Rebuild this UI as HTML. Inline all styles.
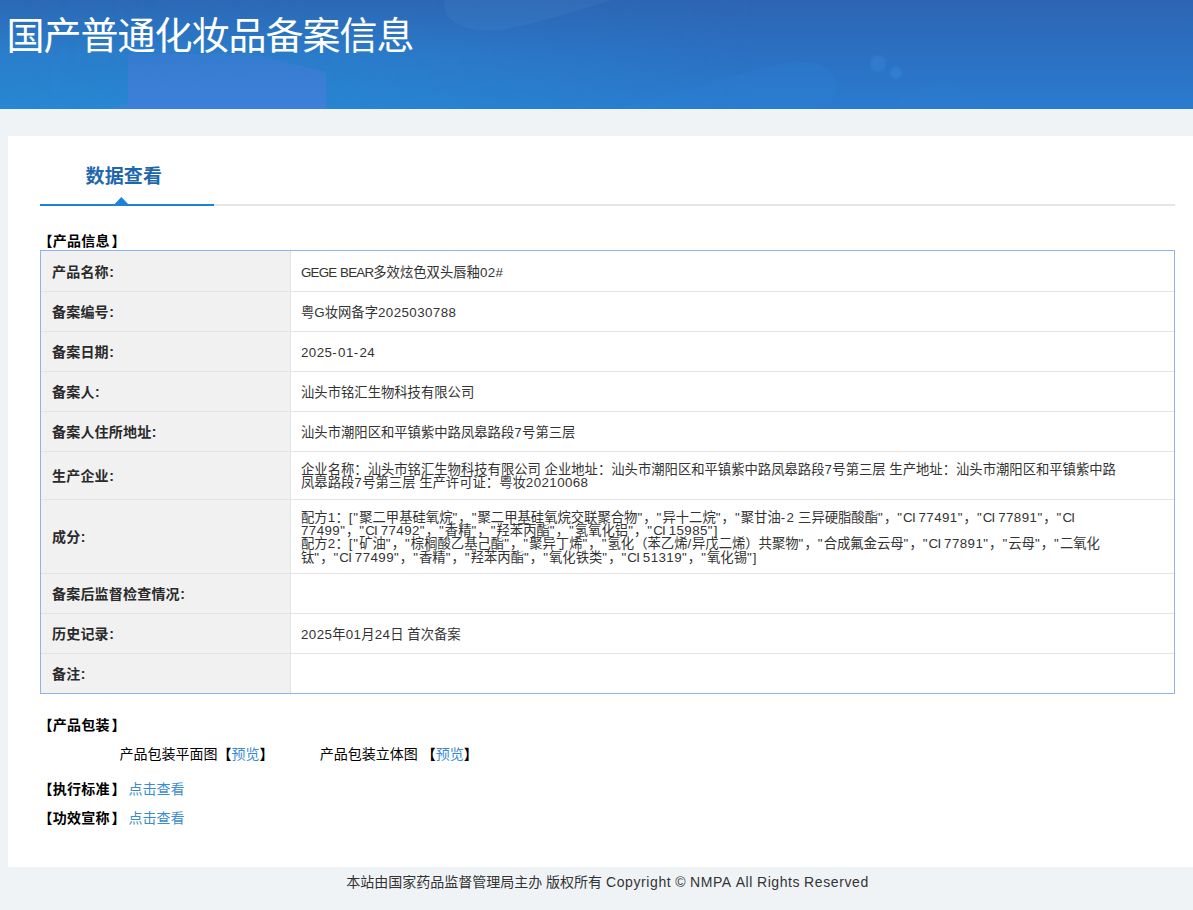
<!DOCTYPE html>
<html lang="zh-CN">
<head>
<meta charset="utf-8">
<title>国产普通化妆品备案信息</title>
<style>
*{box-sizing:border-box;}
html,body{margin:0;padding:0;}
body{background:#f0f3f6;}
.root{position:relative;width:100%;min-width:1193px;height:910px;overflow:hidden;background:#f0f3f6;font-family:"Liberation Sans","Noto Sans CJK SC",sans-serif;font-size:14px;color:#000;overflow:hidden;}
.hd{position:absolute;left:0;top:0;height:109px;width:1215px;overflow:hidden;background:#2b70c1;}
.hd svg{position:absolute;left:0;top:0;display:block;}
.hd h1{position:absolute;left:6.6px;top:11px;margin:0;font-weight:normal;font-size:38px;letter-spacing:-1px;line-height:50px;color:#fff;white-space:nowrap;}
.card{position:absolute;left:8px;top:136px;width:1199px;height:731px;background:#fff;}
.tab{position:absolute;left:32px;top:0;width:1135px;height:70px;border-bottom:2px solid #e6e6e6;}
.tab .on{position:absolute;left:0;top:0;width:174px;height:70px;border-bottom:2px solid #1e82d8;}
.tab .on b{position:absolute;left:45.5px;top:21px;letter-spacing:.15px;font-size:19px;line-height:40px;color:#1e67ac;white-space:nowrap;}
.tab .on i{position:absolute;left:74.7px;bottom:0;width:13.4px;height:7px;background:#1e82d8;clip-path:polygon(50% 0,100% 100%,0 100%);}
.sec{position:absolute;left:30.4px;font-weight:bold;font-size:14px;line-height:18px;white-space:nowrap;letter-spacing:.3px;}
.sec.n{font-weight:normal;letter-spacing:0;}
.sec .r{margin-left:1.6px;}
.sec a{font-weight:normal;letter-spacing:0;margin-left:-1.6px;}
.sec.n a{margin-left:0;}
.sec.n b{font-weight:bold;}
table{position:absolute;left:32px;top:114px;width:1135px;border-collapse:separate;border-spacing:0;border:1px solid #8fb3ea;table-layout:fixed;}
tr{height:40px;}
th,td{border-bottom:1px solid #e4e4e4;padding:0 10px;vertical-align:middle;text-align:left;white-space:nowrap;}
tr:last-child th,tr:last-child td{border-bottom:0;}
th{width:250px;background:#f1f1f1;font-weight:bold;font-size:14px;line-height:18px;color:#2a2a2a;padding-left:11px;border-right:1px solid #e4e4e4;}
td{font-size:13.33px;line-height:13.33px;color:#333;padding-top:2px;}
tr:first-child td{padding-top:3px;}
tr:first-child th{padding-top:2px;}
th{letter-spacing:.2px;}
th i{font-style:normal;margin-left:.4px;}
.d{letter-spacing:.42px;}
.q{letter-spacing:1.1px;}
.b{letter-spacing:.8px;}
.u{letter-spacing:-.78px;}
.h{letter-spacing:1.3px;}
.w{letter-spacing:.6px;}
a{color:#3a8cd0;text-decoration:none;}
.ft{position:absolute;left:0;top:867px;width:1215px;height:43px;text-align:center;font-size:14px;line-height:30px;color:#333;white-space:nowrap;}
.ft .u{letter-spacing:.6px;}
</style>
</head>
<body>
<div class="root">
<div class="hd">
<svg width="1215" height="109" viewBox="0 0 1215 109">
<defs>
<linearGradient id="g0" x1="0" y1="0" x2="0" y2="1"><stop offset="0" stop-color="#2d65b3"/><stop offset=".5" stop-color="#2c70c2"/><stop offset="1" stop-color="#2a7bcf"/></linearGradient>
<linearGradient id="g1" x1="0" y1="0" x2="0" y2="1"><stop offset="0" stop-color="#2c68b5"/><stop offset=".5" stop-color="#2a7ecb"/><stop offset="1" stop-color="#2787d2"/></linearGradient>
<linearGradient id="m1" x1="0" y1="0" x2="1" y2="0"><stop offset="0" stop-color="#fff"/><stop offset=".3" stop-color="#fff" stop-opacity=".8"/><stop offset=".62" stop-color="#fff" stop-opacity="0"/></linearGradient>
<mask id="mk"><rect width="1215" height="109" fill="url(#m1)"/></mask>
<linearGradient id="g2" x1="0" y1="0" x2="0" y2="1"><stop offset="0" stop-color="#3b7bd2" stop-opacity=".6"/><stop offset=".6" stop-color="#3c7ed6" stop-opacity=".95"/><stop offset="1" stop-color="#3b81d9"/></linearGradient>
<filter id="bl" x="-30%" y="-30%" width="160%" height="160%"><feGaussianBlur stdDeviation=".8"/></filter>
</defs>
<rect width="1215" height="109" fill="url(#g0)"/>
<rect width="1215" height="109" fill="url(#g1)" mask="url(#mk)"/>
<path d="M128 54H250L326 72V109H128Z" fill="url(#g2)"/>
<path d="M106 109L128 103V109Z" fill="#3b81d9" opacity=".8"/>
<path d="M445 0H612C575 12 530 25 500 30C465 34 440 20 445 0Z" fill="#5a93d6" opacity=".14"/>
<path d="M612 109C690 92 745 70 790 62C825 58 840 75 836 92C834 100 828 105 820 109Z" fill="#2f88dc" opacity=".2"/>
<circle cx="878" cy="63.5" r="8" fill="#3a8be0" opacity=".36" filter="url(#bl)"/>
<circle cx="896" cy="73" r="6" fill="#3a8be0" opacity=".42" filter="url(#bl)"/>
<path d="M895 109C900 92 920 85 945 85C965 85 978 95 980 109Z" fill="#2f88dc" opacity=".1"/>
</svg>
<h1>国产普通化妆品备案信息</h1>
</div>
<div class="card">
  <div class="tab"><div class="on"><b>数据查看</b><i></i></div></div>
  <div class="sec" style="top:96px">【产品信息<span class="r">】</span></div>
  <table>
    <tr style="height:41px"><th>产品名称<i>:</i></th><td><span class="u">GEGE</span> <span class="u">BEAR</span>多效炫色双头唇釉<span class="d">02</span><span class="h">#</span></td></tr>
    <tr><th>备案编号<i>:</i></th><td>粤G妆网备字<span class="d">2025030788</span></td></tr>
    <tr><th>备案日期<i>:</i></th><td><span class="d">2025</span><span class="h">-</span><span class="d">01</span><span class="h">-</span><span class="d">24</span></td></tr>
    <tr><th>备案人<i>:</i></th><td>汕头市铭汇生物科技有限公司</td></tr>
    <tr><th>备案人住所地址<i>:</i></th><td>汕头市潮阳区和平镇紫中路凤皋路段<span class="d">7</span>号第三层</td></tr>
    <tr style="height:48px"><th>生产企业<i>:</i></th><td style="padding-top:1.5px">企业名称：汕头市铭汇生物科技有限公司 企业地址：汕头市潮阳区和平镇紫中路凤皋路段<span class="d">7</span>号第三层 生产地址：汕头市潮阳区和平镇紫中路<br>凤皋路段<span class="d">7</span>号第三层 生产许可证：粤妆<span class="d">20210068</span></td></tr>
    <tr style="height:74px"><th>成分<i>:</i></th><td style="padding-top:1.7px">配方<span class="d">1</span>：<span class="b">[</span><span class="q">"</span>聚二甲基硅氧烷<span class="q">"</span>，<span class="q">"</span>聚二甲基硅氧烷交联聚合物<span class="q">"</span>，<span class="q">"</span>异十二烷<span class="q">"</span>，<span class="q">"</span>聚甘油<span class="h">-</span><span class="d">2</span> 三异硬脂酸酯<span class="q">"</span>，<span class="q">"</span><span class="u">CI</span> <span class="d">77491</span><span class="q">"</span>，<span class="q">"</span><span class="u">CI</span> <span class="d">77891</span><span class="q">"</span>，<span class="q">"</span><span class="u">CI</span> <br><span class="d">77499</span><span class="q">"</span>，<span class="q">"</span><span class="u">CI</span> <span class="d">77492</span><span class="q">"</span>，<span class="q">"</span>香精<span class="q">"</span>，<span class="q">"</span>羟苯丙酯<span class="q">"</span>，<span class="q">"</span>氢氧化铝<span class="q">"</span>，<span class="q">"</span><span class="u">CI</span> <span class="d">15985</span><span class="q">"</span><span class="b">]</span><br>配方<span class="d">2</span>：<span class="b">[</span><span class="q">"</span>矿油<span class="q">"</span>，<span class="q">"</span>棕榈酸乙基己酯<span class="q">"</span>，<span class="q">"</span>聚异丁烯<span class="q">"</span>，<span class="q">"</span>氢化（苯乙烯<span class="b">/</span>异戊二烯）共聚物<span class="q">"</span>，<span class="q">"</span>合成氟金云母<span class="q">"</span>，<span class="q">"</span><span class="u">CI</span> <span class="d">77891</span><span class="q">"</span>，<span class="q">"</span>云母<span class="q">"</span>，<span class="q">"</span>二氧化<br>钛<span class="q">"</span>，<span class="q">"</span><span class="u">CI</span> <span class="d">77499</span><span class="q">"</span>，<span class="q">"</span>香精<span class="q">"</span>，<span class="q">"</span>羟苯丙酯<span class="q">"</span>，<span class="q">"</span>氧化铁类<span class="q">"</span>，<span class="q">"</span><span class="u">CI</span> <span class="d">51319</span><span class="q">"</span>，<span class="q">"</span>氧化锡<span class="q">"</span><span class="b">]</span></td></tr>
    <tr><th>备案后监督检查情况<i>:</i></th><td></td></tr>
    <tr><th>历史记录<i>:</i></th><td><span class="d">2025</span>年<span class="d">01</span>月<span class="d">24</span>日 首次备案</td></tr>
    <tr style="height:39px"><th>备注<i>:</i></th><td></td></tr>
  </table>
  <div class="sec" style="top:580px">【产品包装<span class="r">】</span></div>
  <div class="sec n" style="top:609px;left:111.6px">产品包装平面图<b>【</b><a>预览</a><b>】</b></div>
  <div class="sec n" style="top:609px;left:311.8px">产品包装立体图 <b>【</b><a>预览</a><b>】</b></div>
  <div class="sec" style="top:644px">【执行标准<span class="r">】</span> <a>点击查看</a></div>
  <div class="sec" style="top:673px">【功效宣称<span class="r">】</span> <a>点击查看</a></div>
</div>
<div class="ft">本站由国家药品监督管理局主办 版权所有 <span class="w">Copyright</span> <span class="w">©</span> <span class="u">NMPA</span> <span class="w">All</span> <span class="w">Rights</span> <span class="w">Reserved</span></div>
</div>
</body>
</html>
